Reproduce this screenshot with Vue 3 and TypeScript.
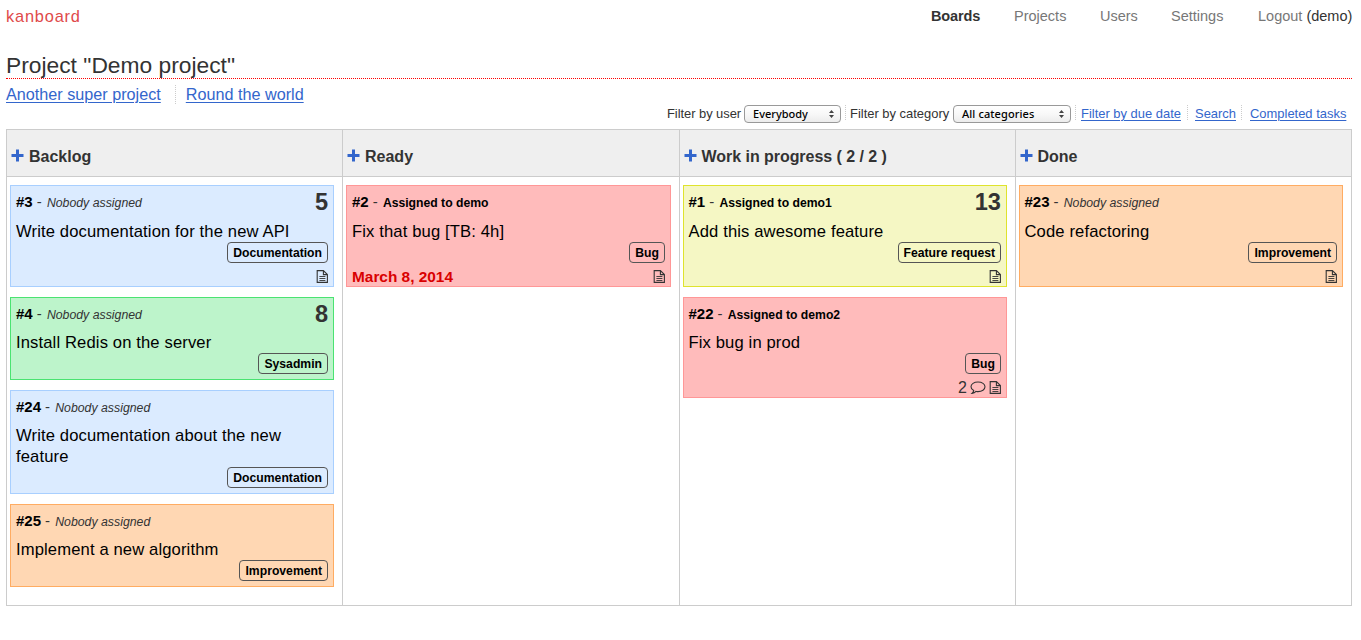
<script setup lang="ts">
interface Task {
  id: number
  color: 'blue' | 'green' | 'red' | 'yellow' | 'orange'
  title: string
  category: string
  assignee?: string
  score?: number
  due?: string
  comments?: number
  description?: boolean
}
interface Column {
  title: string
  limit?: string
  tasks: Task[]
}

const nav = ['Boards', 'Projects', 'Users', 'Settings']

const columns: Column[] = [
  {
    title: 'Backlog',
    tasks: [
      { id: 3, color: 'blue', title: 'Write documentation for the new API', category: 'Documentation', score: 5, description: true },
      { id: 4, color: 'green', title: 'Install Redis on the server', category: 'Sysadmin', score: 8 },
      { id: 24, color: 'blue', title: 'Write documentation about the new feature', category: 'Documentation' },
      { id: 25, color: 'orange', title: 'Implement a new algorithm', category: 'Improvement' },
    ],
  },
  {
    title: 'Ready',
    tasks: [
      { id: 2, color: 'red', title: 'Fix that bug [TB: 4h]', category: 'Bug', assignee: 'demo', due: 'March 8, 2014', description: true },
    ],
  },
  {
    title: 'Work in progress',
    limit: '( 2 / 2 )',
    tasks: [
      { id: 1, color: 'yellow', title: 'Add this awesome feature', category: 'Feature request', assignee: 'demo1', score: 13, description: true },
      { id: 22, color: 'red', title: 'Fix bug in prod', category: 'Bug', assignee: 'demo2', comments: 2, description: true },
    ],
  },
  {
    title: 'Done',
    tasks: [
      { id: 23, color: 'orange', title: 'Code refactoring', category: 'Improvement', description: true },
    ],
  },
]

const heading = (col: Column): string => (col.limit ? `${col.title} ${col.limit}` : col.title)
</script>

<template>
  <div class="page">
    <header class="top">
      <a class="logo">kanboard</a>
      <nav class="nav">
        <a v-for="(item, i) in nav" :key="item" :class="['nav-item', 'nav-' + item.toLowerCase(), { active: i === 0 }]">{{ item }}</a>
        <span class="nav-item nav-logout"><a>Logout</a> <b>(demo)</b></span>
      </nav>
    </header>

    <h2 class="title">Project "Demo project"</h2>

    <div class="projects">
      <a class="link">Another super project</a>
      <span class="sep"></span>
      <a class="link">Round the world</a>
    </div>

    <div class="filters">
      <div class="filter user">
        <label>Filter by user</label>
        <span class="select">
          <span class="everybody">Everybody</span>
          <svg width="5" height="8" viewBox="0 0 5 8"><path d="M2.5 0 5 3H0zM2.5 8 0 5h5z" fill="#444" /></svg>
        </span>
      </div>
      <div class="filter category">
        <label>Filter by category</label>
        <span class="select">
          <span class="categories">All categories</span>
          <svg width="5" height="8" viewBox="0 0 5 8"><path d="M2.5 0 5 3H0zM2.5 8 0 5h5z" fill="#444" /></svg>
        </span>
      </div>
      <div class="filter due"><a class="link">Filter by due date</a></div>
      <div class="filter search"><a class="link">Search</a></div>
      <div class="filter done"><a class="link">Completed tasks</a></div>
    </div>

    <main class="board">
      <section v-for="col in columns" :key="col.title" class="column">
        <h3 class="col-head">
          <svg class="plus" width="13" height="13" viewBox="0 0 13 13"><path d="M5 0.5h3V5h4.5v3H8v4.5H5V8H0.5V5H5z" fill="#36c" /></svg>
          <span>{{ heading(col) }}</span>
        </h3>
        <div class="tasks">
          <article v-for="t in col.tasks" :key="t.id" :class="['task', t.color]">
            <div class="task-head">
              <strong class="task-id">#{{ t.id }}</strong>
              <span class="dash">-</span>
              <strong v-if="t.assignee" class="assigned">Assigned to {{ t.assignee }}</strong>
              <em v-else class="nobody">Nobody assigned</em>
              <span v-if="t.score" class="score">{{ t.score }}</span>
            </div>
            <div class="task-title">{{ t.title }}</div>
            <div class="task-cat"><span class="badge">{{ t.category }}</span></div>
            <div v-if="t.description" class="task-foot">
              <strong v-if="t.due" class="due-date">{{ t.due }}</strong>
              <span class="icons">
                <span v-if="t.comments" class="count">{{ t.comments }}</span>
                <svg v-if="t.comments" class="bubble" width="16" height="14" viewBox="0 0 16 14" fill="none" stroke="#333" stroke-width="1.1">
                  <path d="M8 2C4 2 1 4.1 1 6.8c0 1.6 1 2.9 2.7 3.8-.2 1.1-.8 2-1.7 2.8 1.6-.2 3-.9 4-2 .7.1 1.3.2 2 .2 4 0 7-2.1 7-4.8S12 2 8 2z" />
                </svg>
                <svg width="12" height="13" viewBox="0 0 12 13" fill="none" stroke="#333" stroke-width="1.1">
                  <path d="M1.2.6h6.2l4 4v7.8H1.2zM7.4.6v4h4" />
                  <path d="M3.4 6.5h6M3.4 8.5h6M3.4 10.5h6" stroke-width=".9" />
                </svg>
              </span>
            </div>
          </article>
        </div>
      </section>
    </main>
  </div>
</template>

<style>
body { background: #fff; }
</style>

<style scoped>
* { box-sizing: border-box; }
.page {
  width: 1361px;
  height: 640px;
  padding: 0 9px 0 6px;
  overflow: hidden;
  color: #333;
  font-family: "Liberation Sans", Helvetica, Arial, sans-serif;
  white-space: nowrap;
}
.top {
  display: flex;
  justify-content: space-between;
  height: 32px;
  line-height: 32px;
}
.logo { color: #e04a4a; font-size: 16.4px; line-height: 33px; letter-spacing: 0.8px; }
.nav { display: flex; font-size: 14.5px; color: #777; }
.nav-boards { width: 83px; }
.nav-projects { width: 86px; }
.nav-users { width: 71px; }
.nav-settings { width: 87px; }
.nav-logout { width: 94px; }
.nav-logout b { color: #333; font-weight: normal; }
.active { color: #333; font-weight: bold; letter-spacing: -0.15px; }
.title {
  margin: 21px 0 0;
  height: 26px;
  line-height: 24px;
  font-size: 22.8px;
  font-weight: normal;
  border-bottom: 1px dotted #f00;
}
.projects { display: flex; height: 25px; line-height: 31px; font-size: 16.2px; }
.link {
  color: #36c;
  text-decoration: underline;
  text-underline-offset: 2px;
  text-decoration-thickness: 1px;
}
.sep { height: 19px; margin: 6px 10px 0 14px; border-left: 1px dotted #ccc; }
.filters {
  display: flex;
  justify-content: flex-end;
  height: 25px;
  font-size: 12.95px;
}
.filter {
  display: flex;
  align-items: center;
  height: 15px;
  margin-top: 1px;
  padding-top: 2px;
  border-left: 1px dotted #ccc;
}
.filter label { flex: 1; }
.user { width: 174px; border: 0; margin-right: 4px; letter-spacing: -0.05px; }
.category { width: 226px; padding-left: 4px; margin-right: 4px; }
.due { width: 112px; padding-left: 5px; }
.search { width: 54px; padding-left: 7px; }
.done { width: 111px; padding-left: 8px; }
.select {
  display: flex;
  align-items: center;
  justify-content: space-between;
  flex: none;
  height: 18px;
  padding: 0 6px 0 8px;
  border: 1px solid #999;
  border-radius: 4px;
  background: linear-gradient(#fff, #f8f8f8 50%, #ececec);
  color: #000;
  font: 500 11px "Noto Sans", sans-serif;
}
.everybody { letter-spacing: 0; }
.categories { letter-spacing: 0.1px; }
.user .select { width: 97px; }
.category .select { width: 118px; }
.board {
  display: grid;
  grid-template-columns: 336px 337px 336px 335px;
  width: 1346px;
  height: 477px;
  border: 1px solid #ccc;
}
.column { border-right: 1px solid #ccc; }
.column:last-child { border-right: 0; }
.col-head {
  display: flex;
  align-items: center;
  gap: 5px;
  height: 47px;
  margin: 0;
  padding: 7px 0 0 4px;
  border-bottom: 1px solid #ccc;
  background: #efefef;
  font-size: 16px;
}
.column:nth-child(n + 3) .col-head { padding-left: 3.6px; letter-spacing: -0.05px; }
.plus { margin-top: -2px; }
.tasks {
  display: flex;
  flex-direction: column;
  gap: 10px;
  padding: 8.3px 8px 0 3px;
}
.task { padding: 5px; border: 1px solid; color: #000; }
.column:nth-child(n + 3) .task { padding-left: 4.5px; }
.blue { background: #dbebff; border-color: #a8cfff; }
.green { background: #bdf4cb; border-color: #4ae371; }
.red { background: #ffbbbb; border-color: #ff9797; }
.yellow { background: #f5f7c4; border-color: #dfe32d; }
.orange { background: #ffd7b3; border-color: #ffac62; }
.task-head {
  display: flex;
  align-items: baseline;
  gap: 4px;
  height: 29.5px;
  line-height: 21.2px;
  font-size: 15px;
}
.dash { width: 6.2px; color: #333; }
.assigned { font-size: 12.2px; }
.nobody { font-size: 12.3px; color: #333; }
.score {
  align-self: flex-start;
  margin: 1px 0 0 auto;
  font-size: 23.6px;
  font-weight: bold;
  color: #333;
}
.task-title {
  position: relative;
  top: 1.2px;
  font-size: 16.6px;
  line-height: 20.8px;
  letter-spacing: 0.13px;
  white-space: normal;
}
.task-cat { display: flex; justify-content: flex-end; height: 20.9px; }
.badge {
  height: 21px;
  padding: 0 5px;
  border: 1px solid #555;
  border-radius: 4px;
  line-height: 20px;
  font-size: 12.2px;
  font-weight: bold;
}
.task-foot {
  display: flex;
  align-items: center;
  height: 18.1px;
  padding-top: 9px;
}
.due-date { margin-top: 2px; color: #d90000; font-size: 15.4px; }
.icons { display: flex; align-items: center; gap: 3px; margin-left: auto; color: #333; }
.count { margin-top: 2px; font-size: 16px; }
</style>
